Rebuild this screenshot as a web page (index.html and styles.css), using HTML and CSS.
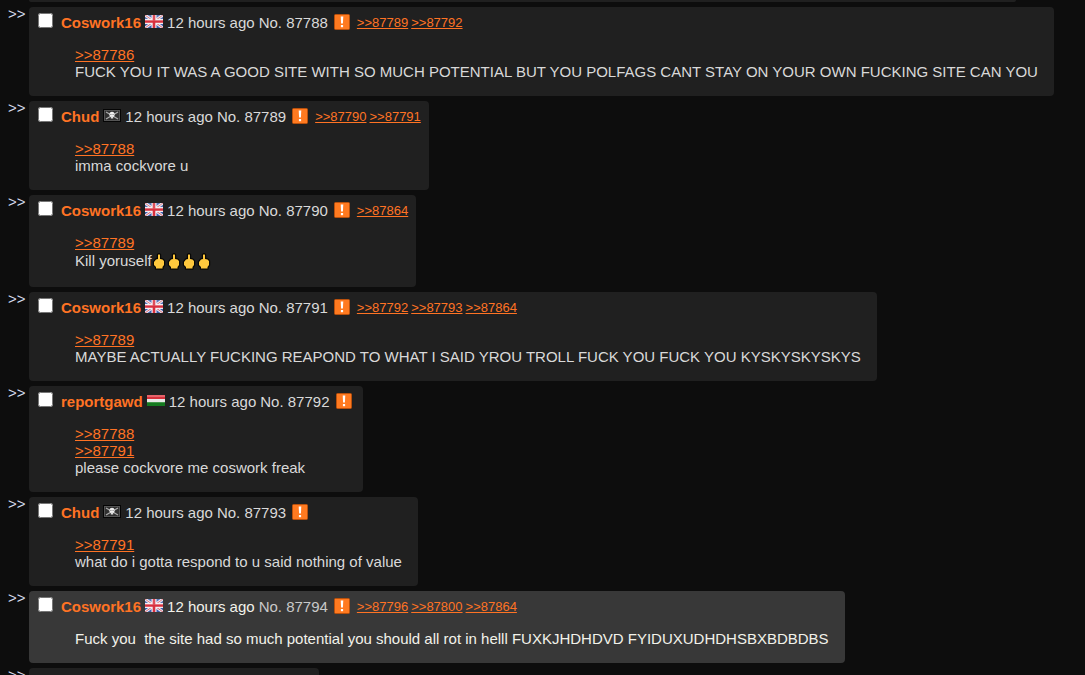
FILE: index.html
```
<!DOCTYPE html>
<html lang="en">
<head>
  <meta charset="UTF-8" />
  <title>Thread</title>
  <meta name="viewport" content="width=device-width, initial-scale=1.0" />
  <link rel="stylesheet" href="styles.css">
</head>
<body>

  <!-- Shared icons -->
  <svg class="sprite" aria-hidden="true">
    <symbol id="flag-gb" viewBox="0 0 18 13">
      <rect width="18" height="13" fill="#3b5cab" />
      <path d="M0 0L18 13M18 0L0 13" stroke="#e8e6f0" stroke-width="3" />
      <path d="M0 0L18 13M18 0L0 13" stroke="#dc6a72" stroke-width="1" />
      <path d="M9 0V13M0 6.5H18" stroke="#f3eef3" stroke-width="5" />
      <path d="M9 0V13M0 6.5H18" stroke="#d9303e" stroke-width="2.6" />
      <rect width="18" height="6" fill="#fff" opacity=".15" />
    </symbol>
    <symbol id="flag-pirate" viewBox="0 0 18 13">
      <rect width="18" height="13" fill="#050505" />
      <rect x="1.500" y="1.500" width="15" height="10" fill="#303030" stroke="#555" stroke-width="1" />
      <path d="M3 3L15 10M15 3L3 10" stroke="#aaa" stroke-width="1.3" />
      <ellipse cx="9" cy="5.5" rx="2.6" ry="2.8" fill="#eee" />
      <rect x="7.8" y="7" width="2.4" height="2.5" fill="#ddd" />
      <path d="M7.4 5.5h1M9.6 5.5h1" stroke="#777" stroke-width="1" />
    </symbol>
    <symbol id="flag-hu" viewBox="0 0 18 13">
      <rect y="1" width="18" height="11" fill="#e9e9e9" />
      <rect y="1" width="18" height="4" fill="#d6303a" />
      <rect y="1" width="18" height="2" fill="#e5636a" />
      <rect y="8" width="18" height="4" fill="#157a20" />
      <rect y="8" width="18" height="1" fill="#45974c" />
    </symbol>
    <symbol id="report" viewBox="0 0 16 16">
      <rect x=".5" y=".5" width="15" height="15" rx="1" fill="#ff7a20" stroke="#b9500c" />
      <path d="M6.7 2.5h2.6l-.4 7H7.1z" fill="#fff" />
      <rect x="6.9" y="11" width="2.2" height="2.2" fill="#fff" />
    </symbol>
    <symbol id="finger" viewBox="0 0 15 17">
      <path d="M6 2Q7 .6 8 2V6L10.500 6.500L12 8V12L10.500 14V15.500H4V14L2 12V9L4 6.500L6 6Z" fill="#ffc83d" stroke="#080705" stroke-width="2.400" stroke-linejoin="round" />
      <path d="M6 2Q7 .6 8 2V6L10.500 6.500L12 8V12L10.500 14V15.500H4V14L2 12V9L4 6.500L6 6Z" fill="#ffc83d" />
    </symbol>
  </svg>

  <main class="thread">
    <div class="reply">
      <span class="arrows"></span>
      <article class="post post-prev"></article>
    </div>

    <div class="reply">
      <span class="arrows">&gt;&gt;</span>
      <article class="post">
        <header class="intro">
          <label class="author"><input type="checkbox"><b class="name">Coswork16</b></label>
          <svg class="flag" role="img" aria-label="United Kingdom"><use href="#flag-gb" /></svg>
          <time>12 hours ago</time>
          <span>No. 87788</span>
          <button class="report" aria-label="Report"><svg><use href="#report" /></svg></button>
          <a class="mentioned" href="#87789">&gt;&gt;87789</a>
          <a class="mentioned" href="#87792">&gt;&gt;87792</a>
        </header>
        <div class="body">
          <p><a href="#87786">&gt;&gt;87786</a></p>
          <p>FUCK YOU IT WAS A GOOD SITE WITH SO MUCH POTENTIAL BUT YOU POLFAGS CANT STAY ON YOUR OWN FUCKING SITE CAN YOU</p>
        </div>
      </article>
    </div>

    <div class="reply">
      <span class="arrows">&gt;&gt;</span>
      <article class="post" id="87789">
        <header class="intro">
          <label class="author"><input type="checkbox"><b class="name">Chud</b></label>
          <svg class="flag" role="img" aria-label="Pirate"><use href="#flag-pirate" /></svg>
          <time>12 hours ago</time>
          <span>No. 87789</span>
          <button class="report" aria-label="Report"><svg><use href="#report" /></svg></button>
          <a class="mentioned" href="#87790">&gt;&gt;87790</a>
          <a class="mentioned" href="#87791">&gt;&gt;87791</a>
        </header>
        <div class="body">
          <p><a href="#87788">&gt;&gt;87788</a></p>
          <p>imma cockvore u</p>
        </div>
      </article>
    </div>

    <div class="reply">
      <span class="arrows">&gt;&gt;</span>
      <article class="post" id="87790">
        <header class="intro">
          <label class="author"><input type="checkbox"><b class="name">Coswork16</b></label>
          <svg class="flag" role="img" aria-label="United Kingdom"><use href="#flag-gb" /></svg>
          <time>12 hours ago</time>
          <span>No. 87790</span>
          <button class="report" aria-label="Report"><svg><use href="#report" /></svg></button>
          <a class="mentioned" href="#87864">&gt;&gt;87864</a>
        </header>
        <div class="body">
          <p><a href="#87789">&gt;&gt;87789</a></p>
          <p class="with-emoji">Kill yoruself<svg class="emoji"><use href="#finger" /></svg><svg class="emoji"><use href="#finger" /></svg><svg class="emoji"><use href="#finger" /></svg><svg class="emoji"><use href="#finger" /></svg></p>
        </div>
      </article>
    </div>

    <div class="reply">
      <span class="arrows">&gt;&gt;</span>
      <article class="post" id="87791">
        <header class="intro">
          <label class="author"><input type="checkbox"><b class="name">Coswork16</b></label>
          <svg class="flag" role="img" aria-label="United Kingdom"><use href="#flag-gb" /></svg>
          <time>12 hours ago</time>
          <span>No. 87791</span>
          <button class="report" aria-label="Report"><svg><use href="#report" /></svg></button>
          <a class="mentioned" href="#87792">&gt;&gt;87792</a>
          <a class="mentioned" href="#87793">&gt;&gt;87793</a>
          <a class="mentioned" href="#87864">&gt;&gt;87864</a>
        </header>
        <div class="body">
          <p><a href="#87789">&gt;&gt;87789</a></p>
          <p>MAYBE ACTUALLY FUCKING REAPOND TO WHAT I SAID YROU TROLL FUCK YOU FUCK YOU KYSKYSKYSKYS</p>
        </div>
      </article>
    </div>

    <div class="reply">
      <span class="arrows">&gt;&gt;</span>
      <article class="post" id="87792">
        <header class="intro">
          <label class="author"><input type="checkbox"><b class="name">reportgawd</b></label>
          <svg class="flag" role="img" aria-label="Hungary"><use href="#flag-hu" /></svg>
          <time>12 hours ago</time>
          <span>No. 87792</span>
          <button class="report" aria-label="Report"><svg><use href="#report" /></svg></button>
        </header>
        <div class="body">
          <p><a href="#87788">&gt;&gt;87788</a></p>
          <p><a href="#87791">&gt;&gt;87791</a></p>
          <p>please cockvore me coswork freak</p>
        </div>
      </article>
    </div>

    <div class="reply">
      <span class="arrows">&gt;&gt;</span>
      <article class="post" id="87793">
        <header class="intro">
          <label class="author"><input type="checkbox"><b class="name">Chud</b></label>
          <svg class="flag" role="img" aria-label="Pirate"><use href="#flag-pirate" /></svg>
          <time>12 hours ago</time>
          <span>No. 87793</span>
          <button class="report" aria-label="Report"><svg><use href="#report" /></svg></button>
        </header>
        <div class="body">
          <p><a href="#87791">&gt;&gt;87791</a></p>
          <p>what do i gotta respond to u said nothing of value</p>
        </div>
      </article>
    </div>

    <div class="reply">
      <span class="arrows">&gt;&gt;</span>
      <article class="post highlighted" id="87794">
        <header class="intro">
          <label class="author"><input type="checkbox"><b class="name">Coswork16</b></label>
          <svg class="flag" role="img" aria-label="United Kingdom"><use href="#flag-gb" /></svg>
          <time>12 hours ago</time>
          <span class="number">No. 87794</span>
          <button class="report" aria-label="Report"><svg><use href="#report" /></svg></button>
          <a class="mentioned" href="#87796">&gt;&gt;87796</a>
          <a class="mentioned" href="#87800">&gt;&gt;87800</a>
          <a class="mentioned" href="#87864">&gt;&gt;87864</a>
        </header>
        <div class="body">
          <p>Fuck you&nbsp; the site had so much potential you should all rot in helll FUXKJHDHDVD FYIDUXUDHDHSBXBDBDBS</p>
        </div>
      </article>
    </div>

    <div class="reply">
      <span class="arrows">&gt;&gt;</span>
      <article class="post post-next"></article>
    </div>
  </main>

</body>
</html>
```
FILE: styles.css
```
body {
  margin: 0;
  height: 100vh;
  overflow: hidden;
  background-color: #0d0d0d;
  color: #d9d9d9;
  font-family: Arial, "Liberation Sans", sans-serif;
  font-size: 15px;
  line-height: 17px;
}

.sprite {
  display: none;
}

.thread {
  display: flex;
  flex-direction: column;
  gap: 5px;
  padding-left: 8px;
}

.reply {
  display: flex;
  align-items: flex-start;
}

.arrows {
  width: 21px;
  flex-shrink: 0;
  color: #d5dced;
  line-height: 14px;
}

/* Posts */
.post {
  padding: 7px 16px 16px 9px;
  background-color: #202020;
  border-radius: 4px;
}

.post.highlighted {
  background-color: #383838;
  color: #f2f2ea;
}

.highlighted .number {
  color: #c8c8c8;
}

.post-prev {
  width: 962px;
  padding-top: 0;
  padding-bottom: 2px;
  border-radius: 0 0 4px 4px;
}

.post-next {
  width: 265px;
}

.intro {
  display: flex;
  align-items: center;
  gap: 4px;
  height: 17px;
  margin-right: -8px;
}

.author {
  display: flex;
  align-items: flex-start;
  gap: 8px;
}

.author input {
  width: 15px;
  height: 15px;
  margin: -1px 0 0;
}

.name,
a {
  color: #ff7324;
}

.flag {
  width: 18px;
  height: 13px;
  margin-bottom: 2px;
}

.report {
  width: 16px;
  height: 16px;
  margin: 0 3px 2px 2px;
  padding: 0;
  border: none;
  background: none;
  cursor: pointer;
}

.report svg {
  display: block;
  width: 16px;
  height: 16px;
}

.mentioned {
  font-size: 13px;
}

.mentioned + .mentioned {
  margin-left: -1px;
}

.body {
  padding: 15px 0 0 37px;
}

.body p {
  margin: 0;
}

.body .with-emoji {
  line-height: 20px;
}

.emoji {
  width: 15px;
  height: 17px;
  vertical-align: -4px;
}
```
